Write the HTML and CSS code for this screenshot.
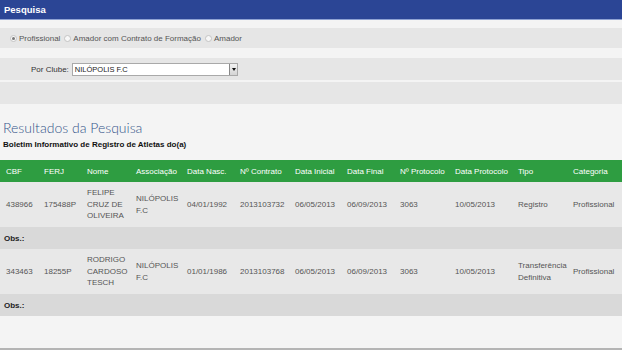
FILE: index.html
```html
<!DOCTYPE html>
<html lang="pt-BR">
<head>
  <meta charset="UTF-8" />
  <title>Pesquisa</title>
  <link rel="stylesheet" href="styles.css">
</head>
<body>
  <div class="topbar">Pesquisa</div>

  <div class="filters">
    <div class="band radios">
      <label class="opt"><span class="radio checked"></span>Profissional</label>
      <label class="opt"><span class="radio"></span>Amador com Contrato de Formação</label>
      <label class="opt"><span class="radio"></span>Amador</label>
    </div>
    <div class="band clube">
      <span class="lbl">Por Clube:</span>
      <div class="select">
        <span class="value">NILÓPOLIS F.C</span>
        <span class="arrow"></span>
      </div>
    </div>
    <div class="band empty"></div>
  </div>

  <h2 class="title">Resultados da Pesquisa</h2>
  <p class="subtitle">Boletim Informativo de Registro de Atletas do(a)</p>

  <table class="results">
    <colgroup>
      <col style="width:38px"><col style="width:43px"><col style="width:49px"><col style="width:51px">
      <col style="width:53px"><col style="width:55px"><col style="width:52px"><col style="width:53px">
      <col style="width:55px"><col style="width:63px"><col style="width:55px"><col style="width:55px">
    </colgroup>
    <thead>
      <tr>
        <th>CBF</th><th>FERJ</th><th>Nome</th><th>Associação</th><th>Data Nasc.</th><th>Nº Contrato</th>
        <th>Data Inicial</th><th>Data Final</th><th>Nº Protocolo</th><th>Data Protocolo</th><th>Tipo</th><th>Categoria</th>
      </tr>
    </thead>
    <tbody>
      <tr class="row">
        <td>438966</td><td>175488P</td><td>FELIPE<br>CRUZ DE<br>OLIVEIRA</td><td>NILÓPOLIS<br>F.C</td>
        <td>04/01/1992</td><td>2013103732</td><td>06/05/2013</td><td>06/09/2013</td>
        <td>3063</td><td>10/05/2013</td><td>Registro</td><td>Profissional</td>
      </tr>
      <tr class="obs"><td colspan="12">Obs.:</td></tr>
      <tr class="row">
        <td>343463</td><td>18255P</td><td>RODRIGO<br>CARDOSO<br>TESCH</td><td>NILÓPOLIS<br>F.C</td>
        <td>01/01/1986</td><td>2013103768</td><td>06/05/2013</td><td>06/09/2013</td>
        <td>3063</td><td>10/05/2013</td><td>Transferência<br>Definitiva</td><td>Profissional</td>
      </tr>
      <tr class="obs"><td colspan="12">Obs.:</td></tr>
    </tbody>
  </table>

  <div class="bottom"></div>
</body>
</html>
```

FILE: styles.css
```css
html, body { height: 100%; }
body {
  margin: 0;
  background: #f4f4f4;
  font-family: 'Liberation Sans', Arial, sans-serif;
  font-size: 8px;
  color: #444;
  display: flex; flex-direction: column;
  overflow: hidden;
}
.topbar {
  height: 19px; line-height: 19px;
  background: #2b4595; color: #fff;
  font-weight: bold; font-size: 9.5px;
  padding-left: 4px;
  border-bottom: 1px solid #8fa2d3;
}
.filters { padding-top: 8px; }
.band { background: #e6e6e6; display: flex; align-items: center; }
.radios { height: 20px; padding-left: 10px; gap: 4px; margin-bottom: 10px; color: #555; }
.opt { display: flex; align-items: center; gap: 2px; }
.radio {
  width: 5px; height: 5px; border-radius: 50%;
  border: 1px solid #c4c4c4; background: #f7f7f7;
  display: inline-block; position: relative;
}
.radio.checked::after {
  content: ''; position: absolute; left: 1px; top: 1px;
  width: 3px; height: 3px; border-radius: 50%; background: #777;
}
.clube { height: 22px; padding-left: 31px; gap: 3px; margin-bottom: 2px; color: #333; }
.select {
  width: 164px; height: 11px;
  background: #fff; border: 1px solid #a9a9a9;
  display: flex; align-items: center; justify-content: space-between;
}
.select .value { padding-left: 2px; color: #222; font-size: 7.5px; }
.select .arrow {
  width: 8px; height: 11px; box-sizing: border-box;
  border-left: 1px solid #888;
  background: linear-gradient(#f2f2f2, #d4d4d4);
  position: relative;
}
.select .arrow::after {
  content: ''; position: absolute; left: 2px; top: 4px;
  border-left: 2px solid transparent; border-right: 2px solid transparent;
  border-top: 3px solid #111;
}
.empty { height: 22px; }
.title {
  margin: 15px 0 0 3px;
  font-family: 'Lato', 'Liberation Sans', sans-serif;
  font-size: 14px; font-weight: 300; line-height: 18px;
  color: #34558a;
}
.subtitle {
  margin: 3px 0 0 3px;
  font-weight: bold; font-size: 8px; line-height: 10px;
  color: #111;
}
.results {
  margin-top: 10px;
  width: 100%;
  table-layout: fixed;
  border-collapse: collapse;
}
.results th, .results td {
  padding: 0 3px 0 6px;
  text-align: left; vertical-align: middle;
  white-space: nowrap;
}
.results th {
  background: #2e9d41; color: #fff;
  font-weight: normal; height: 22px;
}
.row td { background: #e8e8e8; height: 45px; line-height: 11.5px; color: #555; }
.obs td {
  background: #d9d9d9; height: 22px; padding-left: 4px;
  font-weight: bold; color: #222;
}
.bottom { margin-top: auto; height: 2px; background: #b4b4b4; }
```
